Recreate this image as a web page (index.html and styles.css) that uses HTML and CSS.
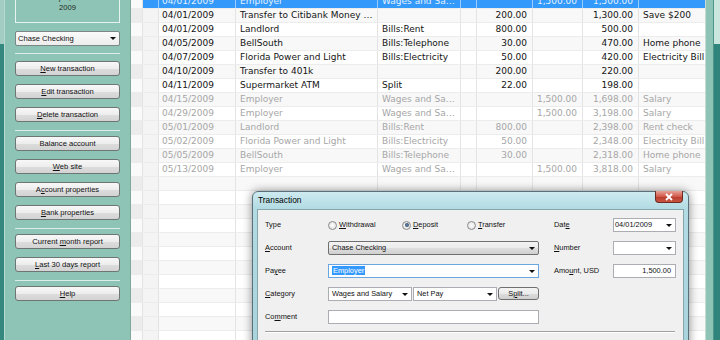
FILE: index.html
```html
<!DOCTYPE html>
<html lang="en">
<head>
    <meta charset="UTF-8">
    <meta name="viewport" content="width=device-width, initial-scale=1.0">
    <title>Checkbook - Chase Checking</title>
    <link rel="stylesheet" href="styles.css">
</head>
<body>
<div class="app">
    <div class="edge-left"></div>

    <!-- account panel -->
    <div class="sidebar">
        <div class="datebox">
            <div>Wednesday</div>
            <div>April, 15</div>
            <div>2009</div>
        </div>
        <div class="combo">Chase Checking<i class="arrow"></i></div>
        <div class="sep first"></div>
        <button class="btn"><u>N</u>ew transaction</button>
        <button class="btn"><u>E</u>dit transaction</button>
        <button class="btn"><u>D</u>elete transaction</button>
        <div class="sep"></div>
        <button class="btn">Balance account</button>
        <button class="btn"><u>W</u>eb site</button>
        <button class="btn">A<u>c</u>count properties</button>
        <button class="btn"><u>B</u>ank properties</button>
        <div class="sep"></div>
        <button class="btn">Current <u>m</u>onth report</button>
        <button class="btn"><u>L</u>ast 30 days report</button>
        <div class="sep"></div>
        <button class="btn"><u>H</u>elp</button>
    </div>

    <!-- register -->
    <div class="ledger">
        <div class="rows">
            <div class="row sel"><div class="cell c0"></div><div class="cell c1"></div><div class="cell d">04/01/2009</div><div class="cell">Employer</div><div class="cell">Wages and Salary</div><div class="cell"></div><div class="cell num"></div><div class="cell num">1,500.00</div><div class="cell num">1,500.00</div><div class="cell memo"></div></div>
            <div class="row"><div class="cell c0"></div><div class="cell c1"></div><div class="cell d">04/01/2009</div><div class="cell">Transfer to Citibank Money Market</div><div class="cell"></div><div class="cell"></div><div class="cell num">200.00</div><div class="cell num"></div><div class="cell num">1,300.00</div><div class="cell memo">Save $200</div></div>
            <div class="row"><div class="cell c0"></div><div class="cell c1"></div><div class="cell d">04/01/2009</div><div class="cell">Landlord</div><div class="cell">Bills:Rent</div><div class="cell"></div><div class="cell num">800.00</div><div class="cell num"></div><div class="cell num">500.00</div><div class="cell memo"></div></div>
            <div class="row"><div class="cell c0"></div><div class="cell c1"></div><div class="cell d">04/05/2009</div><div class="cell">BellSouth</div><div class="cell">Bills:Telephone</div><div class="cell"></div><div class="cell num">30.00</div><div class="cell num"></div><div class="cell num">470.00</div><div class="cell memo">Home phone</div></div>
            <div class="row"><div class="cell c0"></div><div class="cell c1"></div><div class="cell d">04/07/2009</div><div class="cell">Florida Power and Light</div><div class="cell">Bills:Electricity</div><div class="cell"></div><div class="cell num">50.00</div><div class="cell num"></div><div class="cell num">420.00</div><div class="cell memo">Electricity Bill</div></div>
            <div class="row"><div class="cell c0"></div><div class="cell c1"></div><div class="cell d">04/10/2009</div><div class="cell">Transfer to 401k</div><div class="cell"></div><div class="cell"></div><div class="cell num">200.00</div><div class="cell num"></div><div class="cell num">220.00</div><div class="cell memo"></div></div>
            <div class="row"><div class="cell c0"></div><div class="cell c1"></div><div class="cell d">04/11/2009</div><div class="cell">Supermarket ATM</div><div class="cell">Split</div><div class="cell"></div><div class="cell num">22.00</div><div class="cell num"></div><div class="cell num">198.00</div><div class="cell memo"></div></div>
            <div class="row future"><div class="cell c0"></div><div class="cell c1"></div><div class="cell d">04/15/2009</div><div class="cell">Employer</div><div class="cell">Wages and Salary</div><div class="cell"></div><div class="cell num"></div><div class="cell num">1,500.00</div><div class="cell num">1,698.00</div><div class="cell memo">Salary</div></div>
            <div class="row future"><div class="cell c0"></div><div class="cell c1"></div><div class="cell d">04/29/2009</div><div class="cell">Employer</div><div class="cell">Wages and Salary</div><div class="cell"></div><div class="cell num"></div><div class="cell num">1,500.00</div><div class="cell num">3,198.00</div><div class="cell memo">Salary</div></div>
            <div class="row future"><div class="cell c0"></div><div class="cell c1"></div><div class="cell d">05/01/2009</div><div class="cell">Landlord</div><div class="cell">Bills:Rent</div><div class="cell"></div><div class="cell num">800.00</div><div class="cell num"></div><div class="cell num">2,398.00</div><div class="cell memo">Rent check</div></div>
            <div class="row future"><div class="cell c0"></div><div class="cell c1"></div><div class="cell d">05/02/2009</div><div class="cell">Florida Power and Light</div><div class="cell">Bills:Electricity</div><div class="cell"></div><div class="cell num">50.00</div><div class="cell num"></div><div class="cell num">2,348.00</div><div class="cell memo">Electricity Bill</div></div>
            <div class="row future"><div class="cell c0"></div><div class="cell c1"></div><div class="cell d">05/05/2009</div><div class="cell">BellSouth</div><div class="cell">Bills:Telephone</div><div class="cell"></div><div class="cell num">30.00</div><div class="cell num"></div><div class="cell num">2,318.00</div><div class="cell memo">Home phone</div></div>
            <div class="row future"><div class="cell c0"></div><div class="cell c1"></div><div class="cell d">05/13/2009</div><div class="cell">Employer</div><div class="cell">Wages and Salary</div><div class="cell"></div><div class="cell num"></div><div class="cell num">1,500.00</div><div class="cell num">3,818.00</div><div class="cell memo">Salary</div></div>
            <div class="row blank"><div class="cell c0"></div><div class="cell c1"></div><div class="cell"></div><div class="cell"></div><div class="cell"></div><div class="cell"></div><div class="cell"></div><div class="cell"></div><div class="cell"></div><div class="cell memo"></div></div>
            <div class="row blank"><div class="cell c0"></div><div class="cell c1"></div><div class="cell"></div><div class="cell"></div><div class="cell"></div><div class="cell"></div><div class="cell"></div><div class="cell"></div><div class="cell"></div><div class="cell memo"></div></div>
            <div class="row blank"><div class="cell c0"></div><div class="cell c1"></div><div class="cell"></div><div class="cell"></div><div class="cell"></div><div class="cell"></div><div class="cell"></div><div class="cell"></div><div class="cell"></div><div class="cell memo"></div></div>
            <div class="row blank"><div class="cell c0"></div><div class="cell c1"></div><div class="cell"></div><div class="cell"></div><div class="cell"></div><div class="cell"></div><div class="cell"></div><div class="cell"></div><div class="cell"></div><div class="cell memo"></div></div>
            <div class="row blank"><div class="cell c0"></div><div class="cell c1"></div><div class="cell"></div><div class="cell"></div><div class="cell"></div><div class="cell"></div><div class="cell"></div><div class="cell"></div><div class="cell"></div><div class="cell memo"></div></div>
            <div class="row blank"><div class="cell c0"></div><div class="cell c1"></div><div class="cell"></div><div class="cell"></div><div class="cell"></div><div class="cell"></div><div class="cell"></div><div class="cell"></div><div class="cell"></div><div class="cell memo"></div></div>
            <div class="row blank"><div class="cell c0"></div><div class="cell c1"></div><div class="cell"></div><div class="cell"></div><div class="cell"></div><div class="cell"></div><div class="cell"></div><div class="cell"></div><div class="cell"></div><div class="cell memo"></div></div>
            <div class="row blank"><div class="cell c0"></div><div class="cell c1"></div><div class="cell"></div><div class="cell"></div><div class="cell"></div><div class="cell"></div><div class="cell"></div><div class="cell"></div><div class="cell"></div><div class="cell memo"></div></div>
            <div class="row blank"><div class="cell c0"></div><div class="cell c1"></div><div class="cell"></div><div class="cell"></div><div class="cell"></div><div class="cell"></div><div class="cell"></div><div class="cell"></div><div class="cell"></div><div class="cell memo"></div></div>
            <div class="row blank"><div class="cell c0"></div><div class="cell c1"></div><div class="cell"></div><div class="cell"></div><div class="cell"></div><div class="cell"></div><div class="cell"></div><div class="cell"></div><div class="cell"></div><div class="cell memo"></div></div>
            <div class="row blank"><div class="cell c0"></div><div class="cell c1"></div><div class="cell"></div><div class="cell"></div><div class="cell"></div><div class="cell"></div><div class="cell"></div><div class="cell"></div><div class="cell"></div><div class="cell memo"></div></div>
            <div class="row blank"><div class="cell c0"></div><div class="cell c1"></div><div class="cell"></div><div class="cell"></div><div class="cell"></div><div class="cell"></div><div class="cell"></div><div class="cell"></div><div class="cell"></div><div class="cell memo"></div></div>
        </div>
    </div>

    <div class="edge-right"><div class="pad"></div><div class="bar"></div></div>

    <!-- transaction window -->
    <div class="dialog">
        <div class="titlebar">
            Transaction
            <span class="close">
                <svg width="10" height="8" viewBox="0 0 10 8"><path d="M2 1 L8 7 M8 1 L2 7" stroke="#fff" stroke-width="1.8" fill="none"/></svg>
            </span>
        </div>
        <div class="client">
            <div class="form">
                <div class="lbl">Type</div>
                <div class="radios">
                    <span class="radio w1"><i class="knob"></i><span><u>W</u>ithdrawal</span></span>
                    <span class="radio w2"><i class="knob on"></i><span><u>D</u>eposit</span></span>
                    <span class="radio"><i class="knob"></i><span><u>T</u>ransfer</span></span>
                </div>
                <div class="lbl lbl2">Dat<u>e</u></div>
                <div class="field date">04/01/2009<i class="arrow"></i></div>

                <div class="lbl"><u>A</u>ccount</div>
                <div class="field dropbtn">Chase Checking<i class="arrow"></i></div>
                <div class="lbl lbl2"><u>N</u>umber</div>
                <div class="field"><i class="arrow"></i></div>

                <div class="lbl">Pa<u>y</u>ee</div>
                <div class="field focus"><span class="hl">Employer</span><i class="arrow"></i></div>
                <div class="lbl lbl2">Amo<u>u</u>nt, USD</div>
                <div class="field amount">1,500.00</div>

                <div class="lbl"><u>C</u>ategory</div>
                <div class="catrow">
                    <div class="field cat">Wages and Salary<i class="arrow"></i></div>
                    <div class="field cat">Net Pay<i class="arrow"></i></div>
                    <div class="split">S<u>p</u>lit...</div>
                </div>
                <div></div>
                <div></div>

                <div class="lbl">Co<u>m</u>ment</div>
                <div class="field"></div>
            </div>
            <div class="etched"></div>
        </div>
    </div>
</div>
</body>
</html>
```

FILE: styles.css
```css
body {
    margin: 0;
    width: 720px;
    height: 340px;
    overflow: hidden;
    background: #8ec4b5;
    font-family: "Liberation Sans", Arial, sans-serif;
    color: #111;
}
.app {
    display: flex;
    height: 340px;
    position: relative;
    overflow: hidden;
}
.edge-left {
    width: 4px;
    background: linear-gradient(#a3ccc2 0, #a3ccc2 44px, #35887e 44px);
    border-right: 1px solid #b7d9cf;
}

/* account panel */
.sidebar {
    width: 125px;
    box-sizing: border-box;
    padding-left: 10px;
    background: #8ec4b5;
}
.datebox {
    width: 105px;
    box-sizing: border-box;
    margin-top: -22px;
    padding: 4px 0 9px;
    border: 1px solid #e6f4ef;
    text-align: center;
    font-size: 7.6px;
    line-height: 10px;
    color: #1d2826;
}
.combo {
    position: relative;
    width: 105px;
    height: 15px;
    box-sizing: border-box;
    margin: 8px 0 7px;
    padding-left: 2px;
    border: 1px solid #7b8784;
    border-radius: 2px;
    background: linear-gradient(#fbfbfb, #ececec);
    font-size: 7.6px;
    line-height: 13px;
}
.sep {
    width: 105px;
    border-top: 1px solid #d9eee8;
    margin: 0 0 5px;
}
.sep.first {
    margin-bottom: 7px;
}
.btn {
    display: block;
    width: 105px;
    height: 15px;
    box-sizing: border-box;
    margin: 0 0 8px;
    padding: 0;
    border: 1px solid #6e7674;
    border-radius: 3px;
    background: linear-gradient(#f8f8f8, #ededed 50%, #dddddd 51%, #d3d3d3);
    font: 7.6px "Liberation Sans", Arial, sans-serif;
    line-height: 13px;
    color: #111;
    text-align: center;
}
.arrow {
    position: absolute;
    right: 3px;
    top: 5px;
    width: 0;
    height: 0;
    border-left: 3px solid transparent;
    border-right: 3px solid transparent;
    border-top: 3px solid #111;
}

/* register */
.ledger {
    width: 575px;
    box-sizing: border-box;
    border-left: 1px solid #7fa89d;
    background: #fff;
    overflow: hidden;
    font: 9px "DejaVu Sans", Verdana, sans-serif;
    color: #141414;
}
.rows {
    margin-top: -5px;
}
.row {
    display: grid;
    grid-template-columns: 12px 16px 77px 142px 83px 16px 56px 50px 56px 80px;
    height: 14px;
    box-sizing: border-box;
    border-bottom: 1px solid #ececec;
    background: #fff;
}
.row:nth-child(even) {
    background: #f8f8f8;
}
.cell {
    padding: 0 4px;
    line-height: 13px;
    white-space: nowrap;
    overflow: hidden;
    text-overflow: ellipsis;
    border-right: 1px solid #e3e3e3;
}
.c0 {
    padding: 0;
    background: #fafafa;
}
.row:nth-child(even) .c0 {
    background: #ececec;
}
.c1 {
    padding: 0;
    background: #f4f4f4;
}
.d {
    padding-left: 3px;
}
.num {
    text-align: right;
    padding: 0 5px 0 0;
    text-overflow: clip;
}
.memo {
    text-overflow: clip;
    border-right: 0;
}
.row.sel .cell {
    background: #3399fa;
    color: #e4f1ff;
    border-right-color: rgba(255, 255, 255, 0.5);
}
.row.sel .c0 {
    background: #fafafa;
    border-right-color: #e3e3e3;
}
.row.future {
    color: #a6a6a6;
}

.edge-right {
    display: flex;
    width: 15px;
}
.edge-right .pad {
    width: 7px;
    border-left: 1px solid #c9d9d4;
    background: #8ec4b5;
}
.edge-right .bar {
    flex: 1;
    border-left: 1px solid #4f948a;
    background: linear-gradient(#cbe6df 0, #cbe6df 44px, #2f857b 44px);
}

/* transaction window */
.dialog {
    position: absolute;
    left: 252px;
    top: 191px;
    width: 437px;
    height: 170px;
    box-sizing: border-box;
    padding: 0 4px;
    border: 1px solid #58717a;
    border-radius: 6px 6px 0 0;
    background: linear-gradient(#cdeaf0, #b2dbe3 17px, #a8d3dc);
    box-shadow: 0 0 10px rgba(0, 0, 0, 0.45);
}
.titlebar {
    position: relative;
    height: 17px;
    line-height: 17px;
    padding-left: 1px;
    font-size: 8.4px;
    color: #000;
}
.close {
    position: absolute;
    right: 1px;
    top: -1px;
    width: 28px;
    height: 12px;
    box-sizing: border-box;
    border: 1px solid #6d2a24;
    border-top: 0;
    border-radius: 0 0 4px 4px;
    background: linear-gradient(#e9a196, #cf5a4c 50%, #b83b2d 51%, #c9543f);
    display: flex;
    align-items: center;
    justify-content: center;
}
.client {
    height: 200px;
    border: 1px solid #86a6ae;
    background: #f0f0f0;
}
.form {
    display: grid;
    grid-template-columns: 63px 211px 74px 63px;
    grid-auto-rows: 14px;
    row-gap: 9px;
    padding: 8px 7px 0;
    font-size: 7.4px;
    line-height: 14px;
}
.lbl2 {
    padding-left: 15px;
}
.radios {
    display: flex;
    align-items: center;
}
.radio {
    display: flex;
    align-items: center;
    gap: 2px;
}
.radio.w1 {
    width: 74px;
}
.radio.w2 {
    width: 65px;
}
.knob {
    position: relative;
    width: 9px;
    height: 9px;
    box-sizing: border-box;
    border: 1px solid #8b8b8b;
    border-radius: 50%;
    background: radial-gradient(#fdfdfd, #dcdcdc);
}
.knob.on::after {
    content: "";
    position: absolute;
    left: 1.5px;
    top: 1.5px;
    width: 4px;
    height: 4px;
    border-radius: 50%;
    background: radial-gradient(#6b8db0, #1f3550);
}
.field {
    position: relative;
    height: 14px;
    box-sizing: border-box;
    padding: 0 3px;
    border: 1px solid #abadb3;
    background: #fff;
    line-height: 12px;
    white-space: nowrap;
    overflow: hidden;
}
.field.date {
    padding-left: 1px;
}
.field.dropbtn {
    border-color: #707070;
    border-radius: 2px;
    background: linear-gradient(#f3f3f3, #ebebeb 50%, #dedede 51%, #d0d0d0);
}
.field .arrow {
    right: 3px;
    top: 5px;
}
.field.focus {
    border-color: #6aa6e2;
}
.hl {
    padding: 0 1px;
    background: #3399ff;
    color: #fff;
}
.field.amount {
    text-align: right;
    padding-right: 4px;
}
.catrow {
    display: flex;
    gap: 1px;
}
.field.cat {
    width: 84px;
}
.split {
    width: 41px;
    height: 13px;
    box-sizing: border-box;
    border: 1px solid #707070;
    border-radius: 3px;
    background: linear-gradient(#f3f3f3, #ebebeb 50%, #dddddd 51%, #cfcfcf);
    text-align: center;
    line-height: 11px;
}
.etched {
    margin: 7px 8px 0 7px;
    border-top: 1px solid #a0a0a0;
    border-bottom: 1px solid #fff;
}
```
